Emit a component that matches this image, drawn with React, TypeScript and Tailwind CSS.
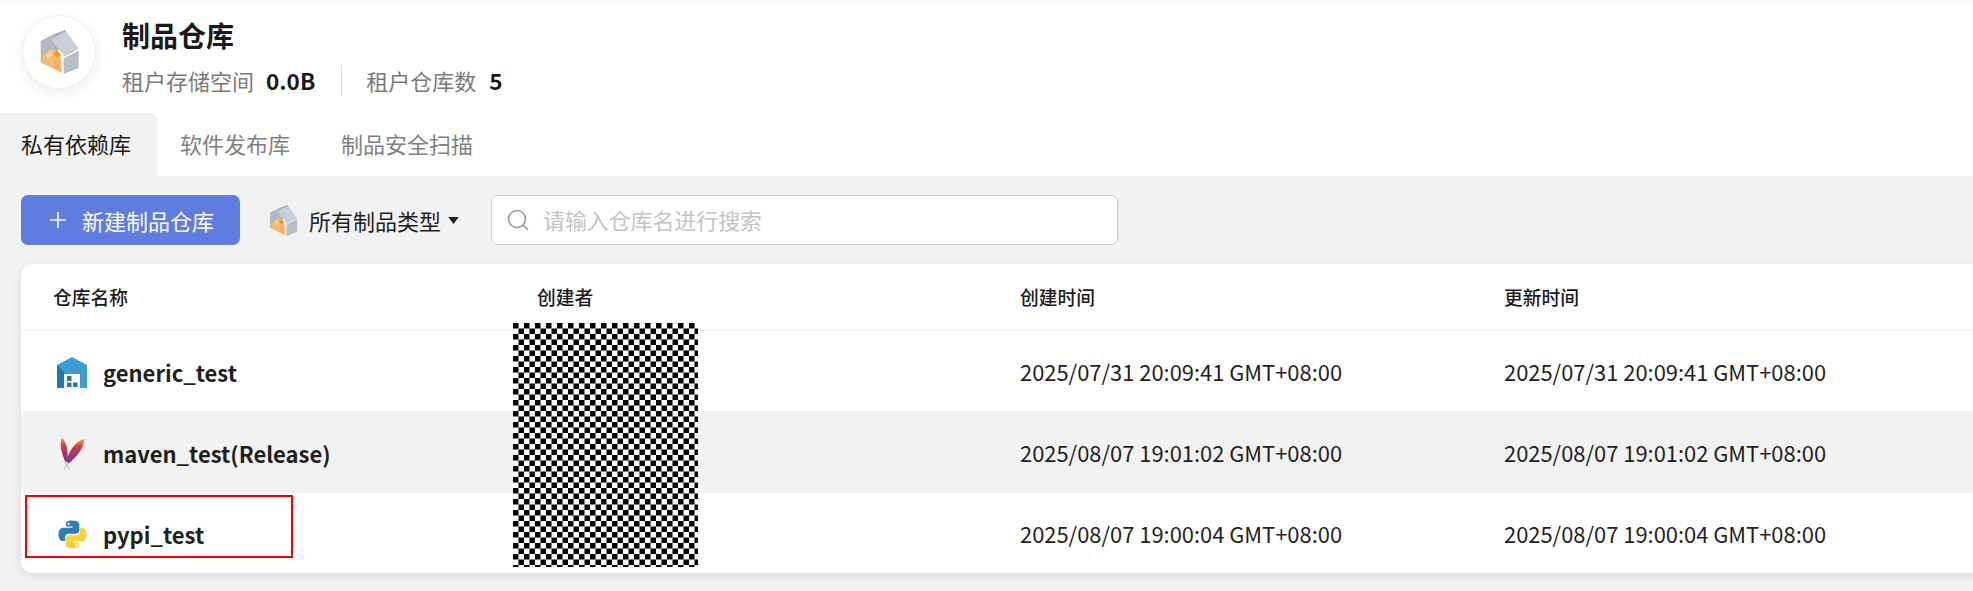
import React from "react";

const font = { fontFamily: '"Noto Sans CJK SC", "Noto Sans", sans-serif' };

function BoxIcon({ w, h }: { w: number; h: number }) {
  return (
    <svg width={w} height={h} viewBox="85 68 128 144">
      <path d="M90 106 L128 85 L124 99 L150 132 L96 176 L90 172 Z" fill="#b3b9c3" />
      <path d="M122 98 L166 71 L209 130 L166 156 Z" fill="#c9cfd9" />
      <path d="M128 85 L166 71 L170 74 L124 99 Z" fill="#aab1bd" />
      <path d="M162 160 L209 135 L209 190 L162 209 Z" fill="#b9bfca" />
      <path d="M94 152 L114 140 L124 130 L152 146 L156 205 L130 192 L96 176 Z" fill="#f6bb6c" />
      <path d="M128 144 L142 136 L152 148 L140 158 Z" fill="#f0932f" />
      <path d="M106 146 L124 136 L130 150 L112 160 Z" fill="#fad08f" />
      <path d="M130 170 L152 160 L154 200 L132 190 Z" fill="#f4b05a" />
    </svg>
  );
}

function GenericIcon() {
  return (
    <svg width="30" height="31" viewBox="0 0 30 31">
      <path d="M0 8 L15 0 L30 8 L30 31 L0 31 Z" fill="#3d9dcf" />
      <path d="M0 8 L23 31 L0 31 Z" fill="#1f7aa8" />
      <rect x="7" y="17" width="16" height="14" fill="#fff" />
      <rect x="10" y="19" width="4.5" height="5" fill="#1f7aa8" />
      <rect x="10" y="25.5" width="4.5" height="4.5" fill="#1f7aa8" />
      <rect x="16" y="25.5" width="4.5" height="4.5" fill="#1f7aa8" />
    </svg>
  );
}

function ApacheIcon() {
  return (
    <svg width="27" height="33" viewBox="60 35 80 100">
      <defs>
        <linearGradient id="f1" x1="0" y1="0" x2="0" y2="1">
          <stop offset="0" stopColor="#f49a3c" />
          <stop offset="0.35" stopColor="#d0364f" />
          <stop offset="1" stopColor="#6e3a8c" />
        </linearGradient>
      </defs>
      <path d="M68 37 C60 52 64 78 79 112 L86 102 C86 78 82 50 68 37 Z" fill="url(#f1)" />
      <path d="M136 41 C114 47 94 66 81 108 L88 115 C112 96 134 70 136 41 Z" fill="url(#f1)" />
      <path d="M78 110 L90 134 M86 112 L74 134" stroke="#b5b0c0" strokeWidth="3" fill="none" />
    </svg>
  );
}

function PythonIcon() {
  return (
    <svg width="29" height="29" viewBox="0 0 110 110">
      <path d="M54 2 C28 2 30 13 30 13 L30 25 L55 25 L55 29 L20 29 C20 29 2 27 2 54 C2 81 17 80 17 80 L27 80 L27 67 C27 67 26 52 42 52 L67 52 C67 52 81 52 81 38 L81 16 C81 16 83 2 54 2 Z M40 10 A4.6 4.6 0 1 1 40 19.2 A4.6 4.6 0 1 1 40 10 Z" fill="#2d7fb5" fillRule="evenodd" />
      <path d="M56 108 C82 108 80 97 80 97 L80 85 L55 85 L55 81 L90 81 C90 81 108 83 108 56 C108 29 93 30 93 30 L83 30 L83 43 C83 43 84 58 68 58 L43 58 C43 58 29 58 29 72 L29 94 C29 94 27 108 56 108 Z M70 100 A4.6 4.6 0 1 1 70 90.8 A4.6 4.6 0 1 1 70 100 Z" fill="#fdd138" fillRule="evenodd" />
    </svg>
  );
}

const rows = [
  { name: "generic_test", icon: <GenericIcon />, time: "2025/07/31 20:09:41 GMT+08:00", h: "h-[80px]", bg: "bg-white" },
  { name: "maven_test(Release)", icon: <ApacheIcon />, time: "2025/08/07 19:01:02 GMT+08:00", h: "h-[82px]", bg: "bg-[#f2f2f2]" },
  { name: "pypi_test", icon: <PythonIcon />, time: "2025/08/07 19:00:04 GMT+08:00", h: "h-[80px]", bg: "bg-white" },
];

export default function App() {
  return (
    <div className="w-[1973px] h-[591px] overflow-hidden bg-white relative" style={font}>
      <div className="h-[6px] bg-linear-to-b from-[#f6f6f6] to-white" />
      <div className="flex items-start h-[107px] pl-[22px] pt-[9px]">
        <div className="w-[74px] h-[74px] rounded-full bg-white border border-[#eeeeee] shadow-[0_4px_14px_rgba(0,0,0,0.07)] flex items-center justify-center">
          <BoxIcon w={41} h={46} />
        </div>
        <div className="ml-[26px] pt-[1px]">
          <div className="text-[28px] leading-[38px] font-bold text-[#1a1a1a]">制品仓库</div>
          <div className="flex items-center mt-[10px] text-[22px] leading-[32px]">
            <span className="text-[#7a7a7a]">租户存储空间</span>
            <span className="ml-[12px] text-[22.5px] font-semibold text-[#1a1a1a]">0.0B</span>
            <span className="w-px h-[31px] bg-[#dddddd] ml-[26px] mr-[24px]" />
            <span className="text-[#7a7a7a]">租户仓库数</span>
            <span className="ml-[13px] text-[22.5px] font-semibold text-[#1a1a1a]">5</span>
          </div>
        </div>
      </div>
      <div className="flex h-[63px] text-[22px]">
        <div className="w-[157px] bg-[#f2f2f2] rounded-tr-[7px] flex items-center pl-[21px] text-[#1a1a1a] pb-[2px]">私有依赖库</div>
        <div className="ml-[23px] flex items-center text-[#808080] pb-[2px]">软件发布库</div>
        <div className="ml-[51px] flex items-center text-[#808080] pb-[2px]">制品安全扫描</div>
      </div>
      <div className="bg-[#f2f2f2] h-[415px] pl-[21px] pt-[19px]">
        <div className="flex items-center h-[50px]">
          <button className="w-[219px] h-[50px] rounded-[7px] bg-[#5f7ddf] text-white text-[22px] flex items-center pl-[28px]">
            <svg width="18" height="18" viewBox="0 0 18 18" className="mr-[15px]">
              <path d="M9 1 V17 M1 9 H17" stroke="#fff" strokeWidth="1.6" />
            </svg>
            新建制品仓库
          </button>
          <div className="flex items-center ml-[29px] text-[22px] text-[#1f1f1f]">
            <BoxIcon w={29} h={33} />
            <span className="ml-[11px]">所有制品类型</span>
            <svg width="11" height="7" viewBox="0 0 12 8" className="ml-[7px]">
              <path d="M0 0 H12 L6 8 Z" fill="#1f1f1f" />
            </svg>
          </div>
          <div className="ml-[32px] w-[627px] h-[50px] rounded-[7px] bg-white border border-[#cccccc] flex items-center pl-[15px] text-[21.9px] text-[#c4c4c4]">
            <svg width="22" height="22" viewBox="0 0 22 22" className="mr-[14px]">
              <circle cx="10" cy="10" r="8.5" stroke="#999" strokeWidth="1.6" fill="none" />
              <path d="M16 16 L21 21" stroke="#999" strokeWidth="1.6" />
            </svg>
            请输入仓库名进行搜索
          </div>
        </div>
        <div className="relative mt-[19px] w-[1980px] h-[309px] bg-white rounded-[12px] shadow-[0_3px_12px_rgba(0,0,0,0.09)] overflow-hidden">
          <div className="grid grid-cols-[484px_483px_484px_1fr] items-center h-[67px] border-b border-[#f0f0f0] pl-[32px] pt-[1px] text-[18.75px] font-medium text-[#1a1a1a]">
            <div>仓库名称</div>
            <div>创建者</div>
            <div>创建时间</div>
            <div>更新时间</div>
          </div>
          {rows.map((r) => (
            <div key={r.name} className={`grid grid-cols-[484px_483px_484px_1fr] items-center pl-[32px] pt-[2px] text-[#1f1f1f] ${r.h} ${r.bg}`}>
              <div className="flex items-center">
                <div className="w-[50px] pl-[4px]">
                  <div className="w-[30px] flex justify-center">{r.icon}</div>
                </div>
                <span className="text-[22px] font-semibold">{r.name}</span>
              </div>
              <div />
              <div className="text-[21.9px]">{r.time}</div>
              <div className="text-[21.9px]">{r.time}</div>
            </div>
          ))}
          <svg className="absolute left-[492px] top-[59px]" width="185" height="244">
            <defs>
              <pattern id="chk" width="11" height="11" patternUnits="userSpaceOnUse">
                <rect width="5.5" height="5.5" fill="#000" />
                <rect x="5.5" y="5.5" width="5.5" height="5.5" fill="#000" />
              </pattern>
            </defs>
            <rect width="185" height="244" fill="#fff" />
            <rect width="185" height="244" fill="url(#chk)" />
          </svg>
          <div className="absolute left-[4px] top-[231px] w-[268px] h-[63px] border-2 border-[#f00000]" />
        </div>
      </div>
    </div>
  );
}
